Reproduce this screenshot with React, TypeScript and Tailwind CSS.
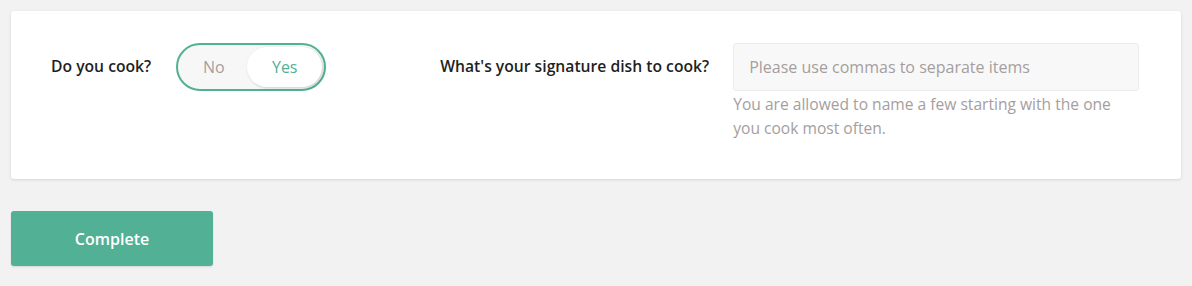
import { useState } from 'react'

export default function App() {
  const [cooks, setCooks] = useState(true)

  return (
    <div className="min-h-[286px] bg-[#f2f2f2] p-[11px] font-['Open_Sans',sans-serif] text-[#1f1f1f]">
      <div className="rounded-[3px] bg-white pl-10 pr-10 pt-8 pb-[39px] shadow-[0_1px_3px_rgba(0,0,0,0.12)]">
        <div className="flex items-start">
          <div className="flex h-12 items-center">
            <span className="text-[15.7px] font-semibold">Do you cook?</span>
          </div>
          <div className="ml-[25px] flex h-12 w-[150px] items-center rounded-full border-2 border-[#52b095] bg-[#f7f7f7] p-[2px]">
            <button
              onClick={() => setCooks(false)}
              className={`flex h-full flex-1 items-center justify-center rounded-full text-[16px] ${
                !cooks ? 'bg-white text-[#52b095] shadow-[1px_1px_3px_rgba(0,0,0,0.18)]' : 'text-[#a59e9e]'
              }`}
            >
              No
            </button>
            <button
              onClick={() => setCooks(true)}
              className={`flex h-full w-[75px] items-center justify-center rounded-full text-[16px] ${
                cooks ? 'bg-white text-[#52b095] shadow-[1px_1px_3px_rgba(0,0,0,0.18)]' : 'text-[#a59e9e]'
              }`}
            >
              Yes
            </button>
          </div>

          <div className="ml-[114px] flex h-12 items-center">
            <span className="text-[15.7px] font-semibold">What's your signature dish to cook?</span>
          </div>
          <div className="ml-6 w-[406px]">
            <input
              placeholder="Please use commas to separate items"
              className="h-12 w-full rounded-[3px] border border-[#ececec] bg-[#f8f8f8] px-[15px] text-[16px] outline-none placeholder:text-[#a59e9e]"
            />
            <p className="mt-[1px] w-[392px] text-[15.6px] leading-6 text-[#a59e9e]">
              You are allowed to name a few starting with the one you cook most often.
            </p>
          </div>
        </div>
      </div>

      <button className="mt-8 h-[55px] w-[202px] rounded-[3px] bg-[#52b095] text-[16px] font-semibold text-white shadow-[0_1px_2px_rgba(0,0,0,0.12)]">
        Complete
      </button>
    </div>
  )
}
